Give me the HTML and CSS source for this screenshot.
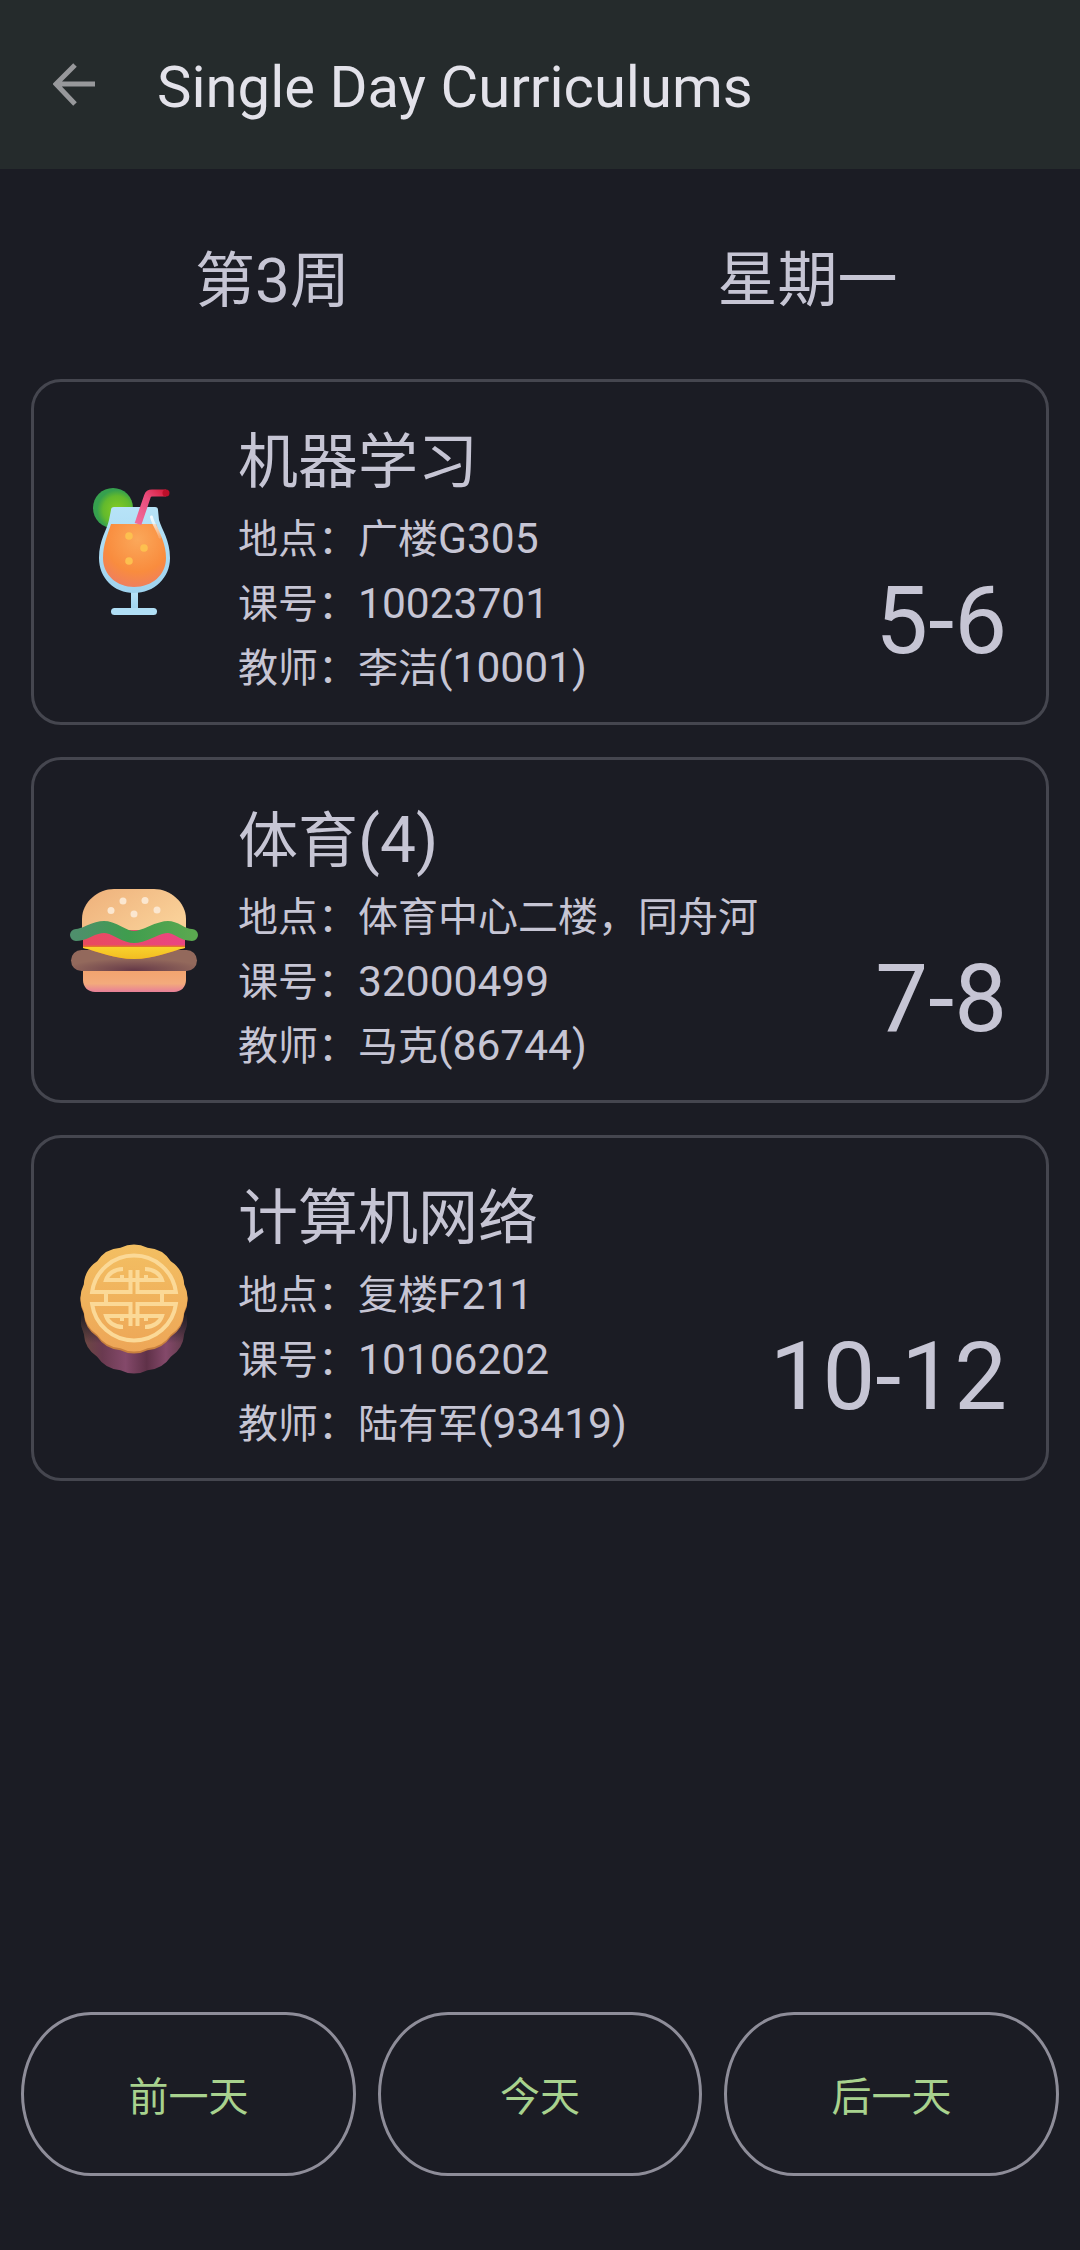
FILE: index.html
```html
<!DOCTYPE html>
<html lang="zh-CN">
<head>
<meta charset="utf-8">
<title>Single Day Curriculums</title>
<link rel="stylesheet" href="styles.css">
</head>
<body>
<div class="page">
  <header class="appbar">
    <svg class="back" viewBox="0 0 44 44" aria-hidden="true"><path d="M42 21H4M22 2 3 21l19 20" fill="none" stroke="#97989b" stroke-width="5"/></svg>
    <h1 class="appbar-title">Single Day Curriculums</h1>
  </header>
  <div class="week-row">
    <div class="week-cell">第<span class="lat-week">3</span>周</div>
    <div class="week-cell">星期一</div>
  </div>
  <div class="cards">
    <section class="card">
      <svg class="emoji" viewBox="0 0 132 132" aria-hidden="true">
        <defs>
          <radialGradient id="lime" cx=".6" cy=".55" r=".5"><stop offset="0" stop-color="#86cc22"/><stop offset=".7" stop-color="#62b92d"/><stop offset="1" stop-color="#36a04e"/></radialGradient>
          <radialGradient id="juice" cx=".55" cy=".25" r=".85"><stop offset="0" stop-color="#fba85a"/><stop offset=".6" stop-color="#f98c3e"/><stop offset="1" stop-color="#ec7a68"/></radialGradient>
          <linearGradient id="glass" x1="0" y1="0" x2="0" y2="1"><stop offset="0" stop-color="#b7e3f8"/><stop offset="1" stop-color="#9fd3ee"/></linearGradient>
          <linearGradient id="straw" x1="0" y1="1" x2="1" y2="0"><stop offset="0" stop-color="#f06c9c"/><stop offset=".6" stop-color="#ea4a7a"/><stop offset="1" stop-color="#d92040"/></linearGradient>
          <linearGradient id="shine" x1="0" y1="0" x2="0" y2="1"><stop offset="0" stop-color="#f4fbff"/><stop offset="1" stop-color="#f4fbff" stop-opacity=".2"/></linearGradient>
        </defs>
        <circle cx="45" cy="22" r="20" fill="url(#lime)"/>
        <path d="M63 105h7v19h-7z" fill="url(#glass)"/>
        <rect x="43" y="122" width="46" height="7" rx="3.500" fill="#b0def5"/>
        <path d="M46 21H87Q90 21 90 24L91 34C94 44 102 54 102 72C102 92 86 107 66 107C46 107 31 92 31 72C31 54 39 44 41 34L43 24Q43 21 46 21z" fill="url(#glass)"/>
        <path d="M43 38H88C92 48 98 58 98 72C98 89 84 101 66 101C49 101 35 89 35 72C35 58 40 48 43 38z" fill="url(#juice)"/>
        <path d="M70 38 79.500 10Q80.500 7 84 7H98" fill="none" stroke="url(#straw)" stroke-width="7"/>
        <circle cx="98" cy="7" r="3.500" fill="#bd0f2a"/>
        <path d="M83.500 31C85 38 90 44 92 51" fill="none" stroke="url(#shine)" stroke-width="3" stroke-linecap="round"/>
        <circle cx="61" cy="50" r="3.800" fill="#fdc04f"/><circle cx="76" cy="62" r="3.800" fill="#fdc04f"/><circle cx="61" cy="75" r="3.800" fill="#fdc04f"/>
      </svg>
      <div class="info">
        <div class="course">机器学习</div>
        <div class="line">地点：广楼<span class="lat">G305</span></div>
        <div class="line">课号：<span class="lat">10023701</span></div>
        <div class="line">教师：李洁<span class="lat">(10001)</span></div>
      </div>
      <div class="time">5-6</div>
    </section>
    <section class="card">
      <svg class="emoji" viewBox="0 0 132 132" aria-hidden="true">
        <defs>
          <linearGradient id="bun" x1="0" y1="0" x2="1" y2=".6"><stop offset="0" stop-color="#eeb07a"/><stop offset="1" stop-color="#f9d098"/></linearGradient>
          <linearGradient id="bunb" x1="0" y1="0" x2="0" y2="1"><stop offset="0" stop-color="#f3a46f"/><stop offset=".6" stop-color="#f3aa7c"/><stop offset="1" stop-color="#e67f98"/></linearGradient>
          <radialGradient id="patty" cx=".5" cy=".95" r=".55"><stop offset="0" stop-color="#663a48"/><stop offset="1" stop-color="#93695c"/></radialGradient>
          <linearGradient id="meat" x1="0" y1="0" x2="1" y2="0"><stop offset="0" stop-color="#e94a5e"/><stop offset="1" stop-color="#ea4682"/></linearGradient>
          <linearGradient id="leaf" x1="0" y1="0" x2="1" y2="0"><stop offset="0" stop-color="#4e8f6c"/><stop offset=".45" stop-color="#3f9d4e"/><stop offset="1" stop-color="#5aa850"/></linearGradient>
          <linearGradient id="cheese" x1="0" y1="0" x2="0" y2="1"><stop offset="0" stop-color="#f9d22c"/><stop offset="1" stop-color="#f2bd22"/></linearGradient>
        </defs>
        <path d="M14 68V55C14 38 30 25 46 25H86C102 25 118 38 118 55V68z" fill="url(#bun)"/>
        <circle cx="55" cy="37" r="3.500" fill="#fbe7d0"/><circle cx="77" cy="36.500" r="3.500" fill="#fbe7d0"/><circle cx="43" cy="46.500" r="3.500" fill="#fbe7d0"/><circle cx="66" cy="50" r="3.500" fill="#fbe7d0"/><circle cx="89" cy="46" r="3.500" fill="#fbe7d0"/>
        <path d="M15 66h102v16H15z" fill="url(#meat)"/>
        <path d="M8 71C18 71 24 63 36 63C48 63 54 73 66 73C78 73 88 63 100 63C110 63 112 71 124 71" fill="none" stroke="url(#leaf)" stroke-width="12" stroke-linecap="round"/>
        <rect x="3" y="86" width="126" height="21" rx="10.500" fill="url(#patty)"/>
        <path d="M15 81.500H117V84C100 88 86 95 66 95S32 88 15 84z" fill="#e5732e"/>
        <path d="M15 83H117V84C100 88 86 95 66 95S32 88 15 84z" fill="url(#cheese)"/>
        <path d="M15 107h103v9c0 7-5 12-12 12H27c-7 0-12-5-12-12z" fill="url(#bunb)"/>
      </svg>
      <div class="info">
        <div class="course">体育<span class="lat-big">(4)</span></div>
        <div class="line">地点：体育中心二楼，同舟河</div>
        <div class="line">课号：<span class="lat">32000499</span></div>
        <div class="line">教师：马克<span class="lat">(86744)</span></div>
      </div>
      <div class="time">7-8</div>
    </section>
    <section class="card">
      <svg class="emoji" viewBox="0 0 132 132" aria-hidden="true">
        <defs>
          <linearGradient id="cakeside" x1="0" y1="0" x2="1" y2="0"><stop offset="0" stop-color="#6e4a40"/><stop offset=".2" stop-color="#6a3a50"/><stop offset=".42" stop-color="#84496a"/><stop offset=".62" stop-color="#5f3148"/><stop offset=".8" stop-color="#84496a"/><stop offset="1" stop-color="#5f3a48"/></linearGradient>
          <linearGradient id="cakefade" x1="0" y1="0" x2="0" y2="1"><stop offset=".2" stop-color="#1b1c24"/><stop offset=".6" stop-color="#1b1c24" stop-opacity="0"/></linearGradient>
          <linearGradient id="caketop" x1="0" y1="0" x2="0" y2="1"><stop offset="0" stop-color="#f3bf62"/><stop offset="1" stop-color="#eda657"/></linearGradient>
          <path id="scallop" d="M79.500 5.800A30 30 0 0 1 102.800 19.200A30 30 0 0 1 116.200 42.500A30 30 0 0 1 116.200 69.500A30 30 0 0 1 102.800 92.800A30 30 0 0 1 79.500 106.200A30 30 0 0 1 52.500 106.200A30 30 0 0 1 29.200 92.800A30 30 0 0 1 15.800 69.500A30 30 0 0 1 15.800 42.500A30 30 0 0 1 29.200 19.200A30 30 0 0 1 52.500 5.800A30 30 0 0 1 79.500 5.800z"/>
          <path id="cakebody" d="M13 56V78A30 30 0 0 0 15.800 91.500A30 30 0 0 0 29.200 114.800A30 30 0 0 0 52.500 128.200A30 30 0 0 0 79.500 128.200A30 30 0 0 0 102.800 114.800A30 30 0 0 0 116.200 91.500A30 30 0 0 0 119 78V56z"/>
        </defs>
        <use href="#cakebody" fill="url(#cakeside)"/>
        <use href="#cakebody" fill="url(#cakefade)"/>
        <use href="#scallop" y="2" fill="#c8803f"/>
        <use href="#scallop" fill="url(#caketop)"/>
        <g fill="none" stroke="#fbd997" stroke-width="4">
          <path d="M62.500 28V50H24.100A42.300 42.300 0 0 1 107.900 50H69.500V28"/>
          <path d="M62.500 38H38C40 32 46 27 55 27M69.500 38H94C92 32 86 27 77 27M54 38V33M78 38V33"/>
          <path d="M62.500 84V62H24.100A42.300 42.300 0 0 0 107.900 62H69.500V84"/>
          <path d="M62.500 74H38C40 80 46 85 55 85M69.500 74H94C92 80 86 85 77 85M54 74V79M78 74V79"/>
          <path d="M62.500 38H69.500M62.500 74H69.500M38 50V62M94 50V62"/>
        </g>
      </svg>
      <div class="info">
        <div class="course">计算机网络</div>
        <div class="line">地点：复楼<span class="lat">F211</span></div>
        <div class="line">课号：<span class="lat">10106202</span></div>
        <div class="line">教师：陆有军<span class="lat">(93419)</span></div>
      </div>
      <div class="time">10-12</div>
    </section>
  </div>
  <div class="actions">
    <button class="pill">前一天</button>
    <button class="pill">今天</button>
    <button class="pill">后一天</button>
  </div>
</div>
</body>
</html>
```

FILE: styles.css
```css
* { box-sizing: border-box; }
html, body { margin: 0; padding: 0; }
body {
  background: #1b1c24;
  font-family: Roboto, "Noto Sans CJK SC", sans-serif;
  color: #c6c5d4;
}
.page {
  width: 1080px;
  height: 2250px;
  display: flex;
  flex-direction: column;
}
.appbar {
  height: 169px;
  background: #252b2c;
  display: flex;
  align-items: center;
  padding-left: 53px;
  flex: none;
}
.back { width: 44px; height: 44px; flex: none; }
.appbar-title {
  margin: 4px 0 0 60px;
  font-size: 58px;
  font-weight: 400;
  color: #e3e2ea;
  line-height: 1;
}
.week-row {
  display: grid;
  grid-template-columns: 1fr 1fr;
  height: 210px;
  align-items: center;
  padding: 14px 5px 0;
  flex: none;
}
.week-cell { text-align: center; font-size: 60px; line-height: 72px; }
.lat-week { font-size: 62px; }
.cards {
  display: flex;
  flex-direction: column;
  gap: 32px;
  padding: 0 31px;
}
.card {
  height: 346px;
  border: 3px solid #45464f;
  border-radius: 30px;
  display: flex;
  align-items: center;
  padding: 0 39px 0 34px;
}
.emoji { width: 132px; height: 132px; flex: none; }
.info { margin-left: 38px; padding-top: 16px; }
.course { font-size: 60px; line-height: 88px; }
.lat-big { font-size: 64px; }
.line { font-size: 40px; line-height: 63.500px; }
.lat { font-size: 42.500px; }
.time {
  margin-left: auto;
  align-self: flex-end;
  font-size: 94px;
  line-height: 96px;
  padding-bottom: 53px;
}
.actions {
  margin-top: auto;
  display: grid;
  grid-template-columns: 335px 324px 335px;
  gap: 22px;
  padding: 0 21px 74px 21px;
}
.pill {
  height: 164px;
  background: transparent;
  border: 3px solid #8e8d99;
  border-radius: 70px / 82px;
  color: #a8d28e;
  font-family: inherit;
  font-size: 40px;
  padding: 0;
}
```
